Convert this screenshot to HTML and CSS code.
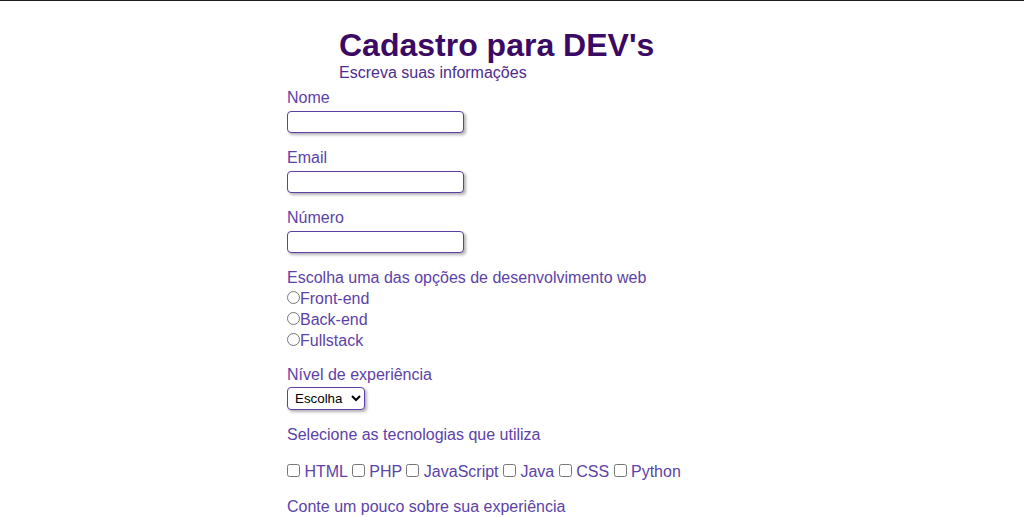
FILE: index.html
```html
<!DOCTYPE html>
<html lang="pt-BR">
<head>
<meta charset="utf-8">
<title>Cadastro para DEV's</title>
<link rel="stylesheet" href="styles.css">
</head>
<body>
<main class="page">
  <header class="header">
    <h1 class="title">Cadastro para DEV's</h1>
    <p class="subtitle">Escreva suas informações</p>
  </header>
  <form class="form">
    <div class="field">
      <label class="label" for="nome">Nome</label>
      <input class="text-input" type="text" id="nome">
    </div>
    <div class="field">
      <label class="label" for="email">Email</label>
      <input class="text-input" type="email" id="email">
    </div>
    <div class="field">
      <label class="label" for="numero">Número</label>
      <input class="text-input" type="text" id="numero">
    </div>
    <div class="field field-radios">
      <span class="label">Escolha uma das opções de desenvolvimento web</span>
      <div class="radios">
        <label class="radio-row"><input class="radio" type="radio" name="area">Front-end</label>
        <label class="radio-row"><input class="radio" type="radio" name="area">Back-end</label>
        <label class="radio-row"><input class="radio" type="radio" name="area">Fullstack</label>
      </div>
    </div>
    <div class="field">
      <label class="label" for="nivel">Nível de experiência</label>
      <select class="select" id="nivel">
        <option>Escolha</option>
        <option>Júnior</option>
        <option>Pleno</option>
        <option>Sênior</option>
      </select>
    </div>
    <div class="field">
      <span class="label">Selecione as tecnologias que utiliza</span>
      <div class="checks"><input class="check" type="checkbox" id="html"> <label for="html">HTML</label> <input class="check" type="checkbox" id="php"> <label for="php">PHP</label> <input class="check" type="checkbox" id="js"> <label for="js">JavaScript</label> <input class="check" type="checkbox" id="java"> <label for="java">Java</label> <input class="check" type="checkbox" id="css"> <label for="css">CSS</label> <input class="check" type="checkbox" id="py"> <label for="py">Python</label></div>
    </div>
    <div class="field">
      <label class="label" for="exp">Conte um pouco sobre sua experiência</label>
      <textarea class="textarea" id="exp"></textarea>
    </div>
  </form>
</main>
</body>
</html>
```
FILE: styles.css
```css
html {
  overflow: hidden;
}
body {
  margin: 0;
  border-top: 1px solid #1f1f22;
  background: #ffffff;
  font-family: "Liberation Sans", Arial, sans-serif;
  color: #5c42a8;
}
.page {
  width: 450px;
  margin: 0 auto;
  padding-top: 26px;
}
.header {
  padding-left: 52px;
}
.title {
  margin: 0;
  font-size: 32px;
  line-height: 37px;
  font-weight: bold;
  color: #3b0a64;
}
.subtitle {
  margin: 0;
  font-size: 16px;
  line-height: 18px;
  color: #4e2c8c;
}
.form {
  margin-top: 7px;
  font-size: 16px;
}
.field {
  margin-bottom: 16px;
}
.label {
  display: block;
  line-height: 18px;
  color: #5c42a8;
}
.text-input {
  display: block;
  box-sizing: border-box;
  width: 177px;
  height: 22px;
  margin: 4px 0 0;
  padding: 0 4px;
  border: 1px solid #5a3fa6;
  border-radius: 4px;
  box-shadow: 2px 2px 3px rgba(0, 0, 0, 0.3);
  background: #fff;
  outline: none;
}
.field-radios {
  margin-bottom: 15px;
}
.radios {
  padding-top: 1px;
}
.radio-row {
  display: block;
  line-height: 21px;
}
.radio {
  width: 13px;
  height: 13px;
  margin: 0;
  vertical-align: baseline;
}
.select {
  display: block;
  box-sizing: border-box;
  width: 78px;
  height: 23px;
  margin-top: 3px;
  padding: 0 3px;
  border: 1px solid #5a3fa6;
  border-radius: 4px;
  box-shadow: 2px 2px 3px rgba(0, 0, 0, 0.3);
  background: #fff;
  font-family: "Liberation Sans", Arial, sans-serif;
  font-size: 13.33px;
  color: #000;
}
.checks {
  margin-top: 17px;
  line-height: 21px;
}
.check {
  width: 13px;
  height: 13px;
  margin: 0;
  vertical-align: baseline;
}
.textarea {
  display: block;
  width: 300px;
  height: 80px;
  margin-top: 4px;
  border: 1px solid #5a3fa6;
  border-radius: 4px;
  box-shadow: 2px 2px 3px rgba(0, 0, 0, 0.3);
}
```
